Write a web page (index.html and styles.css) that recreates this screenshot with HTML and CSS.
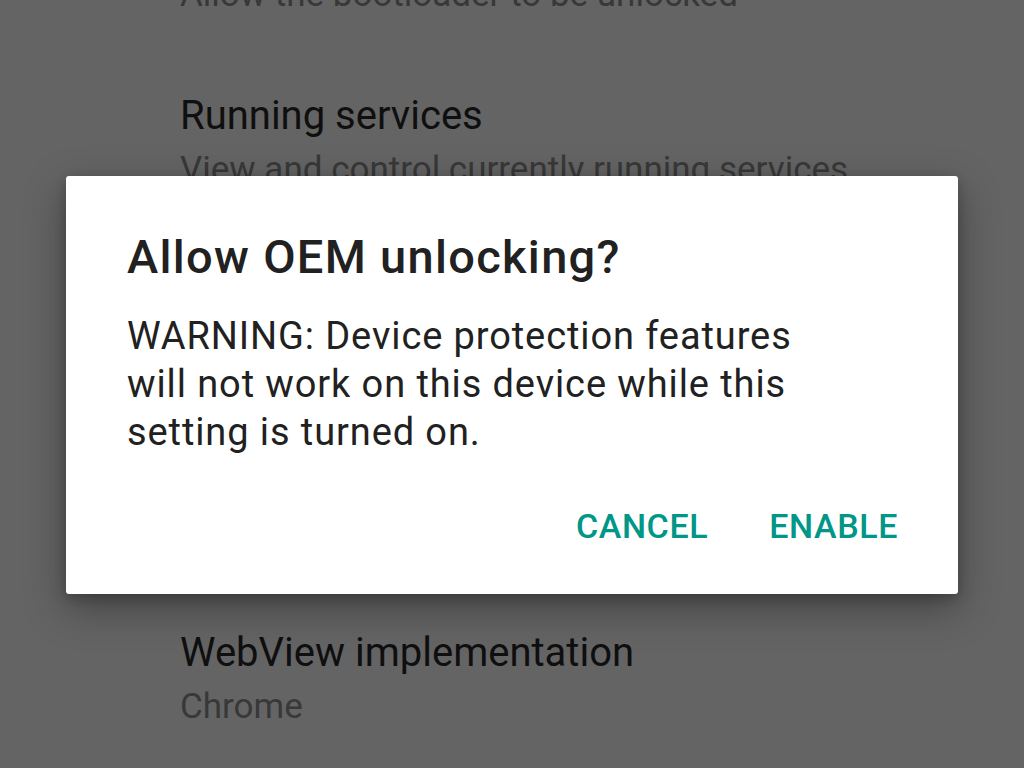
FILE: index.html
```html
<!DOCTYPE html>
<html lang="en">
<head>
<meta charset="utf-8">
<title>Developer options</title>
<link rel="stylesheet" href="styles.css">
</head>
<body>
<div class="screen">
  <div class="list">
    <div class="item">
      <div class="item-title">OEM unlocking</div>
      <div class="item-summary">Allow the bootloader to be unlocked</div>
    </div>
    <div class="item">
      <div class="item-title">Running services</div>
      <div class="item-summary">View and control currently running services</div>
    </div>
    <div class="item">
      <div class="item-title">Color mode</div>
      <div class="item-summary">Use sRGB</div>
    </div>
    <div class="item">
      <div class="item-title">Multiprocess WebView</div>
      <div class="item-summary">Run WebView renderers separately</div>
    </div>
    <div class="item item-shift">
      <div class="item-title">WebView implementation</div>
      <div class="item-summary">Chrome</div>
    </div>
  </div>

  <div class="dialog" role="dialog">
    <h1 class="dialog-title">Allow OEM unlocking?</h1>
    <p class="dialog-body">WARNING: Device protection features will not work on this device while this setting is turned on.</p>
    <div class="dialog-actions">
      <span class="btn">CANCEL</span>
      <span class="btn">ENABLE</span>
    </div>
  </div>
</div>
</body>
</html>
```

FILE: styles.css
```css
html, body {
  margin: 0;
  padding: 0;
}

body {
  width: 1024px;
  height: 768px;
  overflow: hidden;
  background: #646464;
  font-family: Roboto, "Noto Sans", sans-serif;
}

.screen {
  position: relative;
  width: 1024px;
  height: 768px;
  overflow: hidden;
}

.list {
  margin-top: -120px;
  padding-left: 180px;
}

.item {
  padding: 34px 0 33px;
}

.item-shift {
  margin-top: 12px;
}

.item-title {
  font-size: 40px;
  line-height: 54px;
  color: #0f0f0f;
  white-space: nowrap;
}

.item-summary {
  font-size: 35px;
  line-height: 54px;
  color: #383838;
  white-space: nowrap;
}

.dialog {
  position: absolute;
  left: 66px;
  top: 176px;
  width: 892px;
  box-sizing: border-box;
  padding: 53px 60px 44px 61px;
  background: #ffffff;
  border-radius: 3px;
  box-shadow: 0 14px 40px rgba(0, 0, 0, 0.35), 0 4px 12px rgba(0, 0, 0, 0.2);
}

.dialog-title {
  margin: 0;
  font-size: 47px;
  line-height: 56px;
  font-weight: 500;
  letter-spacing: 1.3px;
  color: #212121;
}

.dialog-body {
  margin: 27px 0 0;
  width: 700px;
  font-size: 38px;
  line-height: 48px;
  letter-spacing: 0.9px;
  color: #212121;
}

.dialog-actions {
  margin-top: 46px;
  display: flex;
  justify-content: flex-end;
  gap: 61px;
}

.btn {
  font-size: 34px;
  line-height: 48px;
  font-weight: 500;
  color: #009688;
  letter-spacing: 0.6px;
}
```
